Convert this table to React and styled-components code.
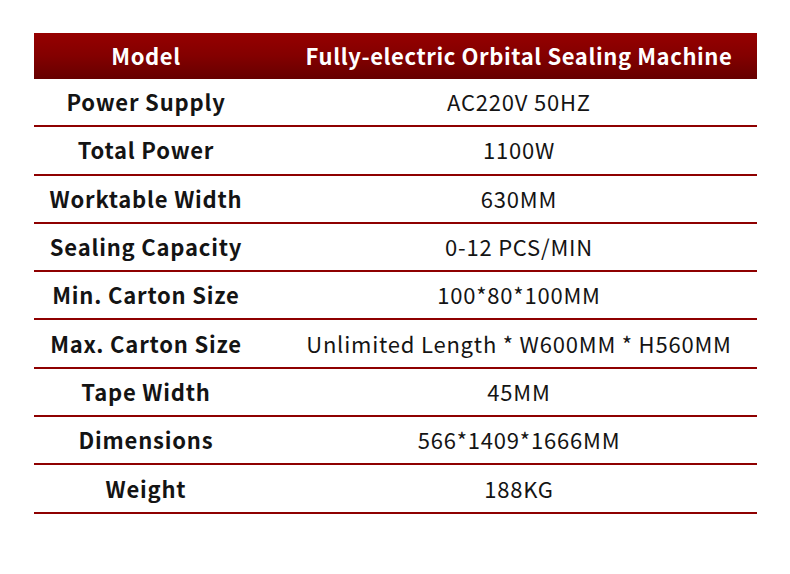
import React from "react";
import styled, { createGlobalStyle } from "styled-components";

const GlobalStyle = createGlobalStyle`
  html, body {
    margin: 0;
    padding: 0;
    background: #ffffff;
  }
  body {
    font-family: "Noto Sans CJK SC", "Noto Sans", sans-serif;
  }
`;

// spec rows of the machine
const rows = [
  { label: "Power Supply", value: "AC220V 50HZ" },
  { label: "Total Power", value: "1100W" },
  { label: "Worktable Width", value: "630MM" },
  { label: "Sealing Capacity", value: "0-12 PCS/MIN" },
  { label: "Min. Carton Size", value: "100*80*100MM" },
  { label: "Max. Carton Size", value: "Unlimited Length * W600MM * H560MM" },
  { label: "Tape Width", value: "45MM" },
  { label: "Dimensions", value: "566*1409*1666MM" },
  { label: "Weight", value: "188KG" },
];

const Page = styled.div`
  width: 790px;
  height: 574px;
  padding: 33px 33px 0 34px;
  box-sizing: border-box;
`;

const Table = styled.div`
  width: 723px;
  display: flex;
  flex-direction: column;
`;

const Row = styled.div`
  display: grid;
  grid-template-columns: 224px 1fr;
  align-items: center;
  height: ${(p) => (p.$head ? "46px" : "46.3px")};
  border-bottom: ${(p) => (p.$head ? "none" : "2px solid #8e0000")};
  background: ${(p) =>
    p.$head ? "linear-gradient(to bottom, #960000 0%, #830000 50%, #660000 100%)" : "transparent"};
`;

const Cell = styled.div`
  text-align: center;
  font-size: 22px;
  letter-spacing: ${(p) => (p.$head ? "0.6px" : "0.8px")};
  line-height: 1;
  white-space: nowrap;
  padding-bottom: 2px;
  padding-left: ${(p) => (p.$value ? "23px" : "0")};
  font-weight: ${(p) => (p.$bold ? 700 : 400)};
  color: ${(p) => (p.$head ? "#ffffff" : "#141414")};
`;

export default function App() {
  return (
    <>
      <GlobalStyle />
      <Page>
        <Table>
          <Row $head>
            <Cell $head $bold>Model</Cell>
            <Cell $head $bold $value>Fully-electric Orbital Sealing Machine</Cell>
          </Row>
          {rows.map((r) => (
            <Row key={r.label}>
              <Cell $bold>{r.label}</Cell>
              <Cell $value>{r.value}</Cell>
            </Row>
          ))}
        </Table>
      </Page>
    </>
  );
}
